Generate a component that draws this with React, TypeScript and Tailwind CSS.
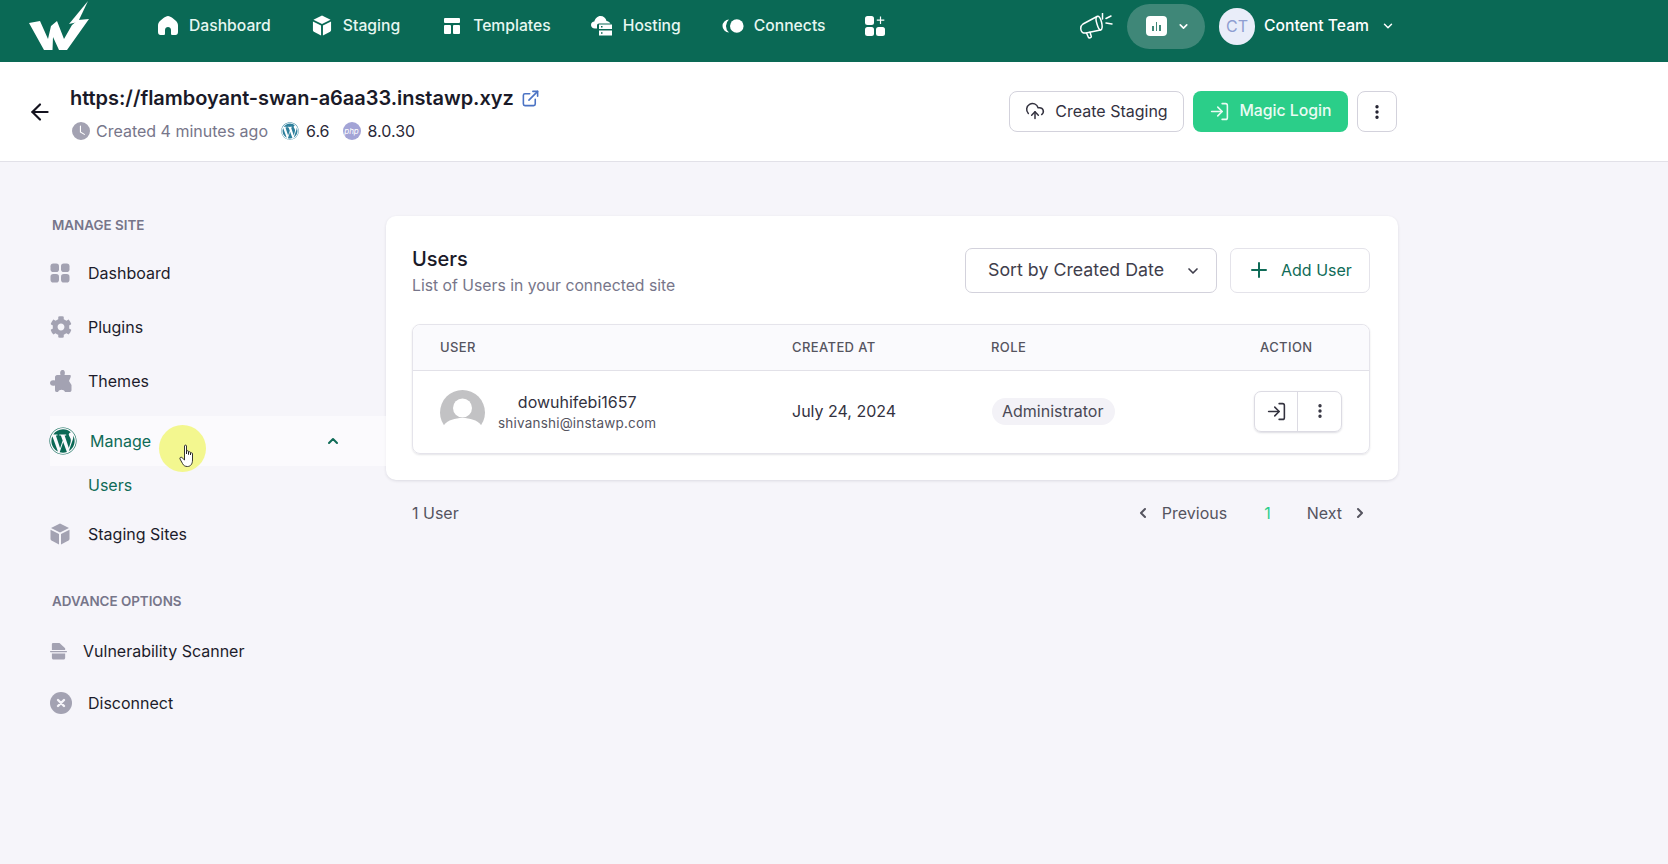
import { ArrowLeft, ChevronDown, ChevronLeft, ChevronRight, ChevronUp, CloudUpload, EllipsisVertical, ExternalLink, LogIn, Plus } from 'lucide-react'
import { FaCog, FaWordpress } from 'react-icons/fa'
import { BsClockFill } from 'react-icons/bs'

const Logo = () => (
	<svg width="60" height="50" viewBox="0 0 60 50" fill="white">
		<path d="M0 22 L11 20 L19 38 L22 25 L28 20 L35 38 L43 24 L49 19 L60 18 L38 49 L30 49 L24 36 L23.5 49 L15 49 Z" />
		<path d="M59 0 L40 23 L49 21 Z" />
	</svg>
)

const HomeIcon = ({ className = '' }: { className?: string }) => (
	<svg className={className} viewBox="0 0 20 19" fill="currentColor">
		<path d="M10 0 C11.5 0 13 1 14.5 2 L17.5 4.5 C19 6 20 7 20 9.5 V16 C20 18 19 19 17.5 19 H14.5 C13.5 19 13 18.5 13 17.5 V14 C13 12 11.5 11 10 11 C8.5 11 7 12 7 14 V17.5 C7 18.5 6.5 19 5.5 19 H2.5 C1 19 0 18 0 16 V9.5 C0 7 1 6 2.5 4.5 L5.5 2 C7 1 8.5 0 10 0 Z" />
	</svg>
)

const BoxIcon = ({ className = '' }: { className?: string }) => (
	<svg className={className} viewBox="0 0 20 22" fill="currentColor">
		<path d="M10 0.5 L19 5 L10 9.5 L1 5 Z" />
		<path d="M0.5 6.8 L9 11 V21.5 L1.5 17.5 C0.8 17 0.5 16.5 0.5 16 Z" />
		<path d="M19.5 6.8 L11 11 V21.5 L18.5 17.5 C19.2 17 19.5 16.5 19.5 16 Z" />
	</svg>
)

const TemplateIcon = ({ className = '' }: { className?: string }) => (
	<svg className={className} viewBox="0 0 16 16" fill="currentColor">
		<rect x="0" y="0" width="16" height="5" rx="1" />
		<rect x="0" y="7" width="7" height="9" rx="1" />
		<rect x="9" y="7" width="7" height="9" rx="1" />
	</svg>
)

const HostingIcon = ({ className = '' }: { className?: string }) => (
	<svg className={className} viewBox="0 0 21 20" fill="currentColor">
		<path d="M6 12.5 H4 C1.5 12.5 0 10.8 0 9 C0 7 1.5 5.6 3.3 5.5 C4 2.5 6.5 0 9.5 0 C12.5 0 15 2 15.5 5 C17 5.2 18.5 6 19.5 7.5 H8 C6.8 7.5 6 8.3 6 9.5 Z" />
		<path d="M8 8.5 H21 V13 H8 Z M10 10 V11.5 H11.5 V10 Z" fillRule="evenodd" />
		<path d="M8 14.5 H21 V19.5 H8 Z M10 16.2 V17.8 H11.5 V16.2 Z" fillRule="evenodd" />
	</svg>
)

const ConnectsIcon = ({ className = '' }: { className?: string }) => (
	<svg className={className} viewBox="0 0 22 14" fill="currentColor">
		<path d="M7 0.5 A6.5 6.5 0 0 0 7 13.5 A 8.5 8.5 0 0 1 7 0.5 Z" />
		<circle cx="14.8" cy="7" r="6.8" />
	</svg>
)

const AppsPlusIcon = ({ className = '' }: { className?: string }) => (
	<svg className={className} viewBox="0 0 20 20" fill="currentColor">
		<rect x="0" y="0" width="9" height="9" rx="2.5" />
		<rect x="0" y="11" width="9" height="9" rx="2.5" />
		<rect x="11" y="11" width="9" height="9" rx="2.5" />
		<path d="M15.5 0.5 V8 M11.8 4.2 H19.3" stroke="currentColor" strokeWidth="1.2" fill="none" />
	</svg>
)

const MegaphoneIcon = ({ className = '' }: { className?: string }) => (
	<svg className={className} viewBox="0 0 33 26" fill="none" stroke="currentColor" strokeWidth="1.5" strokeLinecap="round" strokeLinejoin="round">
		<path d="M3 11 L17 3.5 C19 2.5 20.5 5 21.5 9 C22.5 13 22.5 16.5 20.5 17 L6 20 C3 20.5 1 19 0.8 16 C0.6 14 1.5 12 3 11 Z" />
		<path d="M17 3.5 C15.5 4.5 16 8 17 11 C18 14.5 19 17 20.5 17" />
		<path d="M6.5 20 L8.5 24.5 C9 25.3 11.5 24.8 11.3 23.5 L10 19.3" />
		<path d="M22.5 0.5 V6 M26 5.5 L31 3 M26 10 L32 11" />
	</svg>
)

const GridIcon = ({ className = '' }: { className?: string }) => (
	<svg className={className} viewBox="0 0 20 20" fill="currentColor">
		<rect x="0.5" y="0.5" width="8.5" height="8.5" rx="2.8" />
		<rect x="11" y="0.5" width="8.5" height="8.5" rx="2.8" />
		<rect x="0.5" y="11" width="8.5" height="8.5" rx="2.8" />
		<rect x="11" y="11" width="8.5" height="8.5" rx="2.8" />
	</svg>
)

const PuzzleIcon = ({ className = '' }: { className?: string }) => (
	<svg className={className} viewBox="0 0 22 22" fill="currentColor">
		<path d="M7 5 H10.5 C9.5 1.5 11 0 12.5 0 C14.5 0 15.5 2 14.5 5 L20 5 C21 5 21 6 20.5 7.5 L19 11 L21.5 15 V20 C21.5 21.5 20.5 22 19.5 22 H15 C14 19 9 19 8 22 H6.5 C5.5 22 5 21 5 20 V15.5 C2 16.5 0 15 0 13 C0 11 2 9.5 5 10.5 V7 C5 6 6 5 7 5 Z" />
	</svg>
)

const ScanIcon = ({ className = '' }: { className?: string }) => (
	<svg className={className} viewBox="0 0 19 19" fill="currentColor">
		<path d="M2 8 V2 C2 1 2.6 0.5 3.5 0.5 H10 L16 6 V8 Z" />
		<rect x="0" y="9" width="18" height="1.2" rx="0.6" />
		<path d="M2 11.5 H16 V16 C16 17.4 15 18 14 18 H4 C3 18 2 17.4 2 16 Z" />
	</svg>
)

const CloseCircleIcon = ({ className = '' }: { className?: string }) => (
	<svg className={className} viewBox="0 0 22 22">
		<circle cx="11" cy="11" r="11" fill="currentColor" />
		<path d="M8 8 L14 14 M14 8 L8 14" stroke="#f6f5fa" strokeWidth="2.4" strokeLinecap="round" />
	</svg>
)

const HandCursor = () => (
	<svg width="18" height="24" viewBox="0 0 18 24">
		<path d="M5.5 2 C5.5 0.8 7.5 0.8 7.5 2 V10 V7.5 C7.5 6.5 9.5 6.5 9.5 7.5 V10.5 V8.5 C9.5 7.5 11.5 7.5 11.5 8.5 V11 V9.5 C11.5 8.6 13.5 8.6 13.5 9.5 V16 C13.5 20 11.5 22.5 8.5 22.5 C6 22.5 4.5 21.5 3.5 19.5 L1 15 C0.4 13.6 2 12.6 3 13.6 L5.5 16 Z" fill="white" stroke="#1f1f1f" strokeWidth="0.9" strokeLinejoin="round" />
	</svg>
)

const navItems = [
	{ label: 'Dashboard', icon: <HomeIcon className="w-[20px] h-[19px]" />, cls: 'gap-[11px]' },
	{ label: 'Staging', icon: <BoxIcon className="w-[20px] h-[21px]" />, cls: 'gap-[11px]' },
	{ label: 'Templates', icon: <TemplateIcon className="w-[16px] h-[16px]" />, cls: 'gap-[13px] ml-[3px]' },
	{ label: 'Hosting', icon: <HostingIcon className="w-[21px] h-[20px]" />, cls: 'gap-[11px] ml-[-1px]' },
	{ label: 'Connects', icon: <ConnectsIcon className="w-[22px] h-[14px]" />, cls: 'gap-[10px]' },
]

function SideItem({ icon, label, className = '' }: { icon: React.ReactNode; label: string; className?: string }) {
	return (
		<div className={`flex items-center h-[22px] text-[16px] text-[#1d1c2b] ${className}`}>
			<span className="w-[38px] flex-shrink-0 flex items-center text-[#a3a2b2]">{icon}</span>
			<span>{label}</span>
		</div>
	)
}

export default function App() {
	return (
		<div className="w-[1668px] h-[864px] overflow-hidden bg-[#f6f5fa] font-['Inter',sans-serif] flex flex-col relative">
			<header className="h-[62px] pb-[10px] bg-[#0a6955] flex items-center text-white flex-shrink-0">
				<div className="ml-[29px] w-[129px] flex-shrink-0"><Logo /></div>
				<nav className="flex items-center gap-[41px] text-[15.7px] font-medium text-[#e6f7f1]">
					{navItems.map(item => (
						<div key={item.label} className={`flex items-center ${item.cls}`}>
							<span className="text-white flex items-center">{item.icon}</span>
							<span>{item.label}</span>
						</div>
					))}
					<AppsPlusIcon className="w-[20px] h-[20px] text-white ml-[-2px]" />
				</nav>
				<div className="ml-auto mr-[273px] flex items-center">
					<MegaphoneIcon className="w-[33px] h-[26px] text-white mr-[14px]" />
					<div className="w-[78px] h-[45px] rounded-full bg-[#3f8778] flex items-center pl-[19px] gap-[10px]">
						<span className="w-[21px] h-[20px] rounded-[4px] bg-white flex items-end justify-center gap-[2px] pb-[5px]">
							<i className="w-[1.5px] h-[5px] bg-[#3f8778]" />
							<i className="w-[1.5px] h-[9px] bg-[#3f8778]" />
							<i className="w-[1.5px] h-[6px] bg-[#3f8778]" />
						</span>
						<ChevronDown className="w-[13px] h-[13px]" strokeWidth={3} />
					</div>
					<span className="ml-[14px] w-[36px] h-[37px] rounded-full bg-[#e9edf9] text-[#8f9ed1] text-[16px] flex items-center justify-center">CT</span>
					<span className="ml-[9px] text-[15.7px] font-medium">Content Team</span>
					<ChevronDown className="ml-[12px] w-[14px] h-[14px]" strokeWidth={2.5} />
				</div>
			</header>

			<div className="h-[100px] bg-white border-b border-[#e2e1e8] flex items-center flex-shrink-0 pr-[271px]">
				<ArrowLeft className="ml-[27px] w-[26px] h-[26px] text-[#14131f]" strokeWidth={2} />
				<div className="ml-[17px] mt-[3px]">
					<div className="flex items-center gap-[7px] h-[26px]">
						<span className="text-[20px] font-semibold text-[#1a1a28] tracking-[-0.04px]">https://flamboyant-swan-a6aa33.instawp.xyz</span>
						<ExternalLink className="w-[19px] h-[19px] text-[#4b73c4]" strokeWidth={2} />
					</div>
					<div className="flex items-center text-[16px] mt-[10px] h-[20px] pl-[2px]">
						<BsClockFill className="w-[18px] h-[18px] text-[#a3a2b2]" />
						<span className="ml-[6px] text-[#77768a]">Created 4 minutes ago</span>
						<FaWordpress className="ml-[13px] w-[18px] h-[18px] text-[#2d7f9c]" />
						<span className="ml-[7px] text-[#2a2938]">6.6</span>
						<span className="ml-[13px] w-[18px] h-[18px] rounded-full bg-[#a3a4d6] text-white text-[8px] italic flex items-center justify-center">php</span>
						<span className="ml-[7px] text-[#2a2938]">8.0.30</span>
					</div>
				</div>
				<div className="ml-auto flex items-center">
					<button className="w-[175px] h-[41px] rounded-[8px] border border-[#d3d2dc] bg-white flex items-center justify-center gap-[10px] text-[16px] text-[#33323f] pb-[1px]">
						<CloudUpload className="w-[20px] h-[20px]" strokeWidth={1.8} />
						Create Staging
					</button>
					<button className="ml-[9px] w-[155px] h-[41px] rounded-[8px] bg-[#2bce89] flex items-center justify-center gap-[9px] text-[15.8px] font-medium text-[#eafbf4] pb-[1px]">
						<LogIn className="w-[21px] h-[21px]" strokeWidth={1.8} />
						Magic Login
					</button>
					<button className="ml-[9px] w-[40px] h-[41px] rounded-[8px] border border-[#d3d2dc] bg-white flex items-center justify-center text-[#1d1c2b]">
						<EllipsisVertical className="w-[18px] h-[18px]" strokeWidth={2.5} />
					</button>
				</div>
			</div>

			<div className="flex flex-1 items-start">
				<aside className="w-[386px] flex-shrink-0 pl-[50px] pt-[55px] relative">
					<div className="pl-[2px] text-[13.4px] font-semibold text-[#77768a] leading-[16px]">MANAGE SITE</div>
					<div className="mt-[29px] flex flex-col gap-[32px]">
						<SideItem icon={<GridIcon className="w-[20px] h-[20px]" />} label="Dashboard" />
						<SideItem icon={<FaCog className="w-[22px] h-[22px]" />} label="Plugins" />
						<SideItem icon={<PuzzleIcon className="w-[22px] h-[22px]" />} label="Themes" />
					</div>
					<div className="mt-[24px] h-[50px] flex items-center bg-white/50 text-[16px] text-[#0f6b57]">
						<FaWordpress className="w-[28px] h-[28px] text-[#0a6955] flex-shrink-0 ml-[-1px]" />
						<span className="ml-[13px]">Manage</span>
						<ChevronUp className="ml-[174px] w-[16px] h-[16px]" strokeWidth={3} />
					</div>
					<div className="pl-[38px] mt-[8px] text-[16px] text-[#0f6b57] leading-[22px]">Users</div>
					<SideItem className="mt-[27px]" icon={<BoxIcon className="w-[20px] h-[22px]" />} label="Staging Sites" />
					<div className="pl-[2px] mt-[48px] text-[13.4px] font-semibold text-[#77768a] leading-[16px]">ADVANCE OPTIONS</div>
					<div className="mt-[31px] flex items-center h-[22px] text-[16px] text-[#1d1c2b]">
						<span className="w-[33px] text-[#a3a2b2]"><ScanIcon className="w-[18px] h-[19px]" /></span>
						Vulnerability Scanner
					</div>
					<SideItem className="mt-[30px]" icon={<CloseCircleIcon className="w-[22px] h-[22px]" />} label="Disconnect" />
					<div className="absolute left-[159px] top-[263px] w-[47px] h-[47px] rounded-full bg-[#f3f78f] flex items-center justify-center">
						<span className="mt-[14px] ml-[11px]"><HandCursor /></span>
					</div>
				</aside>

				<main className="w-[1012px] mt-[54px]">
					<section className="h-[264px] bg-white rounded-[10px] shadow-[0_1px_3px_rgba(30,30,60,0.12)] pl-[26px] pr-[28px] pt-[32px]">
						<div className="flex items-start justify-between">
							<div className="mt-[-2px]">
								<h2 className="text-[20px] font-medium text-[#1a1a28] leading-[26px]">Users</h2>
								<p className="text-[15.75px] text-[#77768a] leading-[20px] mt-[4px]">List of Users in your connected site</p>
							</div>
							<div className="flex gap-[13px]">
								<div className="w-[252px] h-[45px] rounded-[7px] border border-[#d3d2dc] flex items-center pl-[22px] pr-[15px] text-[17.8px] text-[#3f3e4c] justify-between">
									Sort by Created Date
									<ChevronDown className="w-[16px] h-[16px]" strokeWidth={2.5} />
								</div>
								<div className="w-[140px] h-[45px] rounded-[7px] border border-[#e4e3ea] flex items-center pl-[16px] pb-[2px] gap-[10px] text-[16px] text-[#0f6b57]">
									<Plus className="w-[24px] h-[24px]" strokeWidth={2} />
									Add User
								</div>
							</div>
						</div>
						<div className="mt-[28px] rounded-[8px] border border-[#e5e4eb] shadow-[0_1px_2px_rgba(30,30,60,0.12)] h-[130px]">
							<div className="h-[46px] pt-[1px] bg-[#fafafd] rounded-t-[8px] border-b border-[#e2e1e8] grid grid-cols-[352px_199px_269px_1fr] pl-[27px] items-center text-[13px] font-medium tracking-[0.4px] text-[#55545f]">
								<span>USER</span>
								<span>CREATED AT</span>
								<span>ROLE</span>
								<span>ACTION</span>
							</div>
							<div className="h-[82px] grid grid-cols-[352px_199px_262px_1fr] pl-[27px] items-center">
								<div className="flex items-center">
									<svg className="w-[45px] h-[45px]" viewBox="0 0 45 45">
										<circle cx="22.5" cy="22.5" r="22.5" fill="#c2c2c4" />
										<circle cx="22.5" cy="18" r="9.5" fill="white" />
										<path d="M4 35 C8 30 15 28 22.5 28 C30 28 37 30 41 35 L41 45 L4 45 Z" fill="white" />
									</svg>
									<div className="ml-[13px] flex flex-col items-center">
										<span className="text-[16px] text-[#33323f] leading-[22px]">dowuhifebi1657</span>
										<span className="text-[13.5px] text-[#55545f] leading-[20px] tracking-[0.2px]">shivanshi@instawp.com</span>
									</div>
								</div>
								<span className="text-[16px] text-[#33323f] mt-[-2px]">July 24, 2024</span>
								<span className="justify-self-start mt-[-2px] ml-[1px] pl-[10px] pr-[12px] h-[27px] rounded-full bg-[#f3f2f7] text-[16px] text-[#4a4955] flex items-center">Administrator</span>
								<div className="ml-[1px] mt-[-2px] w-[88px] h-[41px] rounded-[7px] border border-[#dcdbe3] shadow-[0_1px_2px_rgba(30,30,60,0.15)] flex">
									<span className="w-[43px] border-r border-[#dcdbe3] flex items-center justify-center text-[#33323f]"><LogIn className="w-[21px] h-[21px]" strokeWidth={1.8} /></span>
									<span className="flex-1 flex items-center justify-center text-[#33323f]"><EllipsisVertical className="w-[18px] h-[18px]" strokeWidth={2.5} /></span>
								</div>
							</div>
						</div>
					</section>
					<div className="mt-[22px] pl-[26px] pr-[30px] flex items-center justify-between text-[16px] text-[#55545f] leading-[22px]">
						<span>1 User</span>
						<div className="flex items-center">
							<ChevronLeft className="w-[16px] h-[16px]" strokeWidth={3} />
							<span className="ml-[11px]">Previous</span>
							<span className="ml-[37px] text-[#2bce89]">1</span>
							<span className="ml-[36px]">Next</span>
							<ChevronRight className="ml-[10px] w-[16px] h-[16px]" strokeWidth={3} />
						</div>
					</div>
				</main>
			</div>
		</div>
	)
}
